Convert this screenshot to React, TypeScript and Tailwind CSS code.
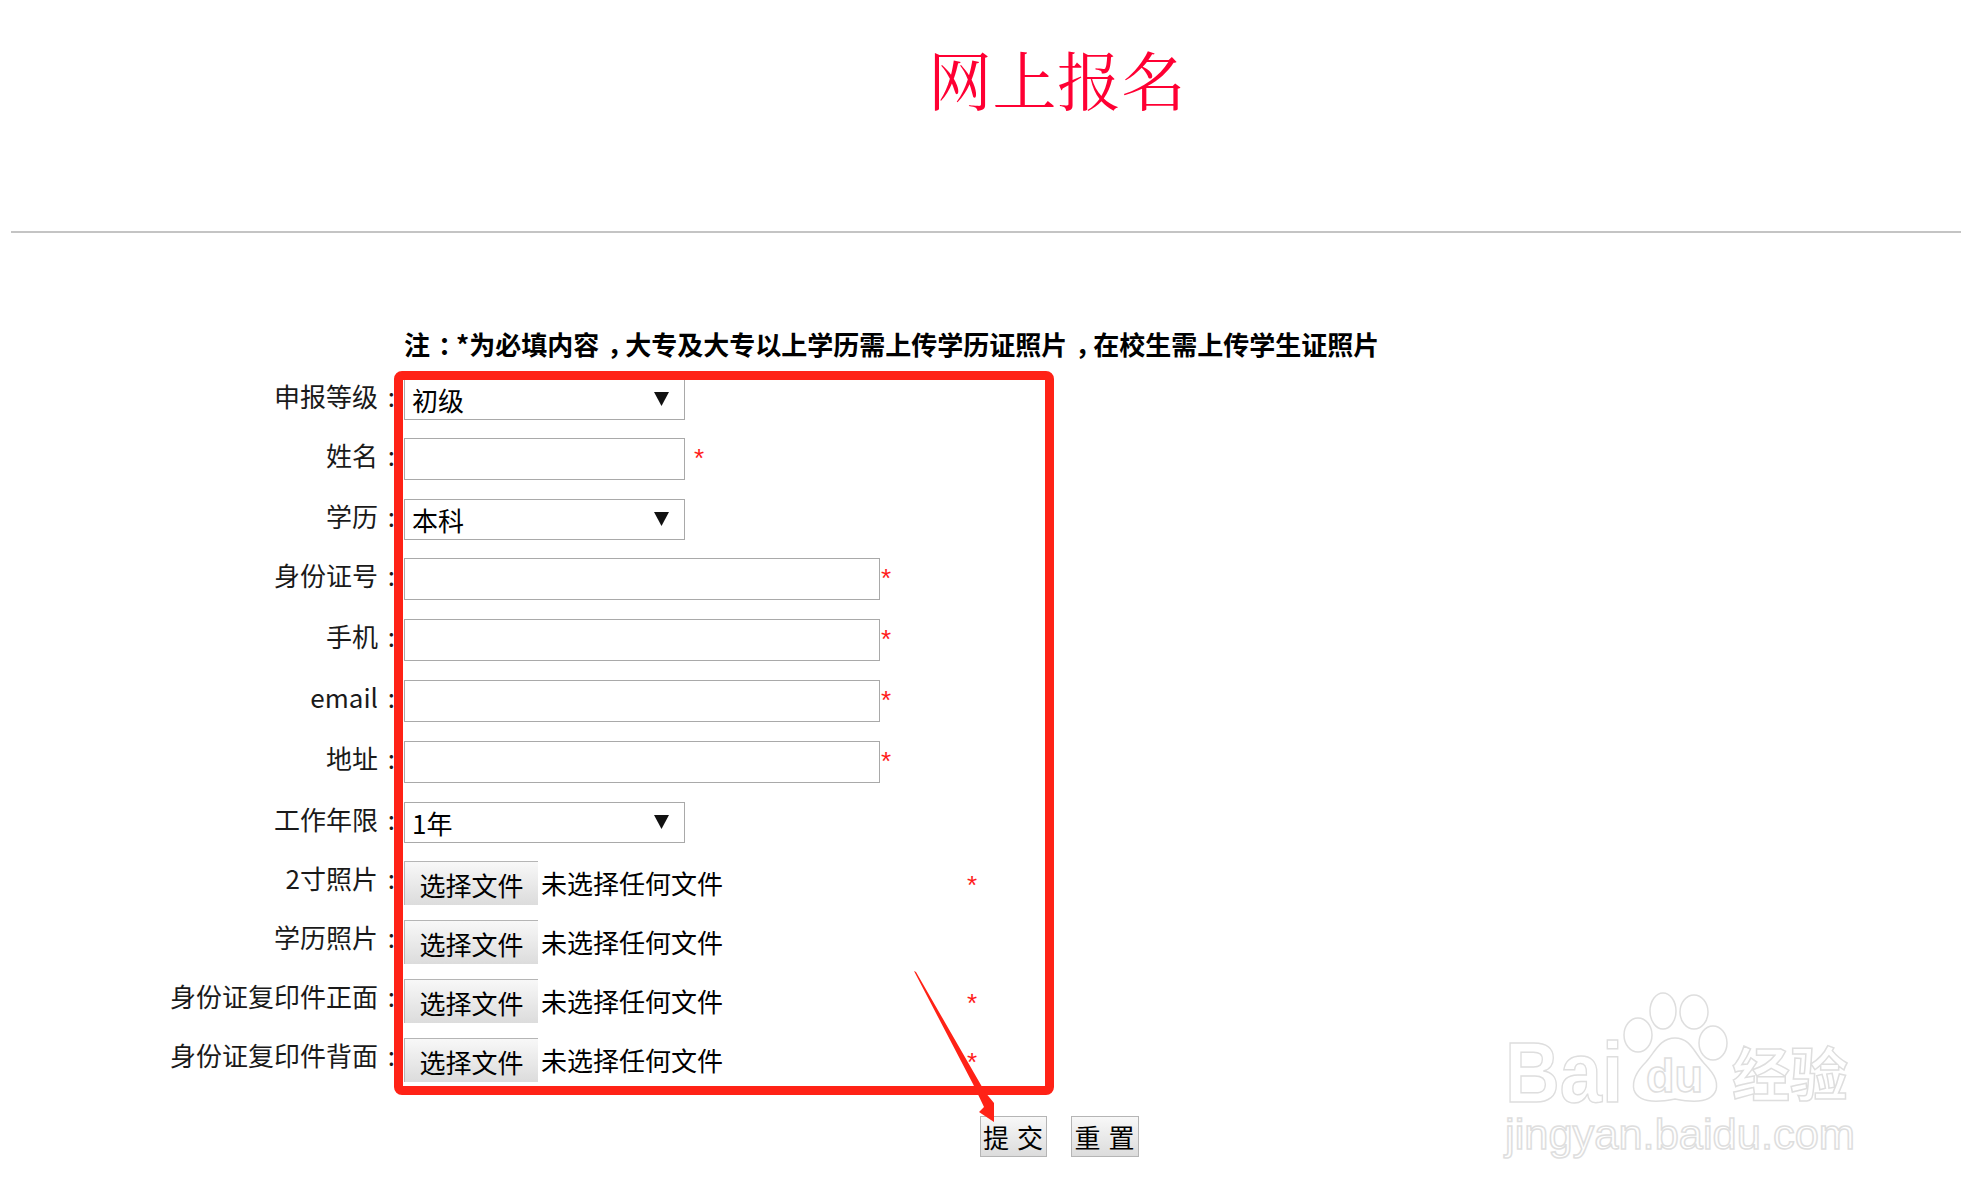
import React from "react";

function Label({ text }: { text: string }) {
  return (
    <div className="w-[404px] shrink-0 pr-[6px] text-right text-[26px] leading-[36px] text-[#1a1a1a] whitespace-nowrap">
      {text}<span className="inline-block w-[20px] text-right pr-[3px]">:</span>
    </div>
  );
}

function Star({ className }: { className: string }) {
  return <span className={"font-['Liberation_Sans',sans-serif] text-[26px] leading-[30px] text-[#ff1a1a] " + className}>*</span>;
}

function Pick({ value, options }: { value: string; options: string[] }) {
  return (
    <div className="relative h-[41px] w-[281px]">
      <select
        defaultValue={value}
        className="h-full w-full appearance-none border border-[#a9a9a9] bg-white pl-[7px] pt-[1px] text-[26px] leading-[34px] text-black outline-none"
      >
        {options.map((o) => (
          <option key={o}>{o}</option>
        ))}
      </select>
      <svg className="pointer-events-none absolute left-[250px] top-[13px] h-[14px] w-[15px]" viewBox="0 0 15 14">
        <path d="M0 0H15L7.500 14Z" fill="#111" />
      </svg>
    </div>
  );
}

function FileRow({ label, star, last }: { label: string; star?: boolean; last?: boolean }) {
  return (
    <div className={last ? "flex h-[44px] items-start" : "mb-[15px] flex h-[44px] items-start"}>
      <div className="-mt-[1px]">
        <Label text={label} />
      </div>
      <button
        type="button"
        className="h-[44px] w-[134px] shrink-0 border-l border-t border-[#b5b5b5] bg-gradient-to-b from-[#f8f8f8] to-[#dcdcdc] pt-[3px] text-[26px] leading-[36px] text-black"
      >
        选择文件
      </button>
      <span className="ml-[3px] mt-[4px] w-[426px] shrink-0 text-[26px] leading-[36px] text-black whitespace-nowrap">未选择任何文件</span>
      {star && <Star className="mt-[9px]" />}
    </div>
  );
}

function TextRow({ label, wide, mb }: { label: string; wide?: boolean; mb: string }) {
  return (
    <div className={"flex h-[42px] items-start " + mb}>
      <div className="-mt-[1px]">
        <Label text={label} />
      </div>
      <input
        type="text"
        className={
          wide
            ? "h-[42px] w-[476px] shrink-0 border border-[#a9a9a9] bg-white outline-none"
            : "h-[42px] w-[281px] shrink-0 border border-[#a9a9a9] bg-white outline-none"
        }
      />
      {wide ? <Star className="ml-[1px] mt-[5px]" /> : <Star className="ml-[9px] mt-[5px]" />}
    </div>
  );
}

function SelectRow({ label, value, options, mb }: { label: string; value: string; options: string[]; mb: string }) {
  return (
    <div className={"flex h-[41px] items-start " + mb}>
      <div className="-mt-[1px]">
        <Label text={label} />
      </div>
      <Pick value={value} options={options} />
    </div>
  );
}

function Mark({ c }: { c: string }) {
  return <span className="pl-[8px] pr-[5px] [font-feature-settings:'halt']">{c}</span>;
}

export default function App() {
  return (
    <div className="relative h-[1202px] w-[1961px] overflow-hidden bg-white font-['Noto_Sans_CJK_SC','Liberation_Sans',sans-serif] text-black">
      <h1 className="flex h-[231px] justify-center pl-[153px] pt-[32px] font-['Noto_Serif_CJK_SC','Liberation_Serif','Noto_Sans_CJK_SC',serif] text-[64px] font-normal leading-[90px] tracking-[0.5px] text-[#ff0033]">
        网上报名
      </h1>
      <div className="ml-[11px] h-[2px] bg-[#c4c4c4]" />

      <p className="ml-[404px] mt-[93px] text-[26px] font-bold leading-[36px] whitespace-nowrap text-black">
        注<Mark c="：" />*为必填内容<Mark c="，" />大专及大专以上学历需上传学历证照片<Mark c="，" />在校生需上传学生证照片
      </p>

      <form className="mt-[17px]">
        <SelectRow label="申报等级" value="初级" options={["初级", "中级", "高级"]} mb="mb-[18px]" />
        <TextRow label="姓名" mb="mb-[19px]" />
        <SelectRow label="学历" value="本科" options={["本科", "大专", "硕士"]} mb="mb-[18px]" />
        <TextRow label="身份证号" wide mb="mb-[19px]" />
        <TextRow label="手机" wide mb="mb-[19px]" />
        <TextRow label="email" wide mb="mb-[19px]" />
        <TextRow label="地址" wide mb="mb-[19px]" />
        <SelectRow label="工作年限" value="1年" options={["1年", "2年", "3年"]} mb="mb-[18px]" />
        <FileRow label="2寸照片" star />
        <FileRow label="学历照片" />
        <FileRow label="身份证复印件正面" star />
        <FileRow label="身份证复印件背面" star last />

        <div className="ml-[980px] mt-[34px] flex gap-[24px]">
          <button
            type="button"
            className="h-[41px] w-[67px] border border-[#b5b5b5] bg-gradient-to-b from-[#f8f8f8] to-[#dcdcdc] text-[26px] leading-[36px] tracking-[1px] text-black whitespace-nowrap"
          >
            提 交
          </button>
          <button
            type="button"
            className="h-[41px] w-[68px] border border-[#b5b5b5] bg-gradient-to-b from-[#f8f8f8] to-[#dcdcdc] text-[26px] leading-[36px] tracking-[1px] text-black whitespace-nowrap"
          >
            重 置
          </button>
        </div>
      </form>

      {/* red annotation box */}
      <div className="pointer-events-none absolute left-[394px] top-[371px] h-[724px] w-[660px] rounded-[8px] border-[9px] border-[#ff2216]" />

      {/* red annotation arrow */}
      <svg className="pointer-events-none absolute left-[905px] top-[965px] h-[165px] w-[100px]" viewBox="905 965 100 165">
        <path d="M914 971L916 972L985 1092L994 1103V1122L979 1112L984 1107L973 1084Z" fill="#ff2216" />
      </svg>

      {/* watermark */}
      <svg className="pointer-events-none absolute left-[1460px] top-[970px] h-[210px] w-[420px]" viewBox="0 0 420 210">
        <g fill="white" stroke="#dedede" strokeWidth="1.500">
          <text x="45" y="132" fontFamily="'Liberation Sans', sans-serif" fontWeight="700" fontSize="86" textLength="118" lengthAdjust="spacingAndGlyphs">Bai</text>
          <ellipse cx="178" cy="65" rx="14" ry="17" />
          <ellipse cx="203" cy="41" rx="13" ry="18" />
          <ellipse cx="234" cy="42" rx="14" ry="17" />
          <ellipse cx="253" cy="73" rx="14" ry="17" />
          <path d="M215 68C200 68 195 82 186 92C176 102 172 112 174 120C178 132 195 133 215 129C235 133 252 132 256 120C259 108 250 100 243 92C234 82 230 68 215 68Z" />
          <text x="186" y="122" fontFamily="'Liberation Sans', sans-serif" fontWeight="700" fontSize="46" textLength="57" lengthAdjust="spacingAndGlyphs">du</text>
          <text x="272" y="126" fontFamily="'Noto Sans CJK SC', sans-serif" fontWeight="700" fontSize="58">经验</text>
          <text x="45" y="179" fontFamily="'Liberation Sans', sans-serif" fontSize="42" textLength="350" lengthAdjust="spacingAndGlyphs">jingyan.baidu.com</text>
        </g>
      </svg>
    </div>
  );
}
